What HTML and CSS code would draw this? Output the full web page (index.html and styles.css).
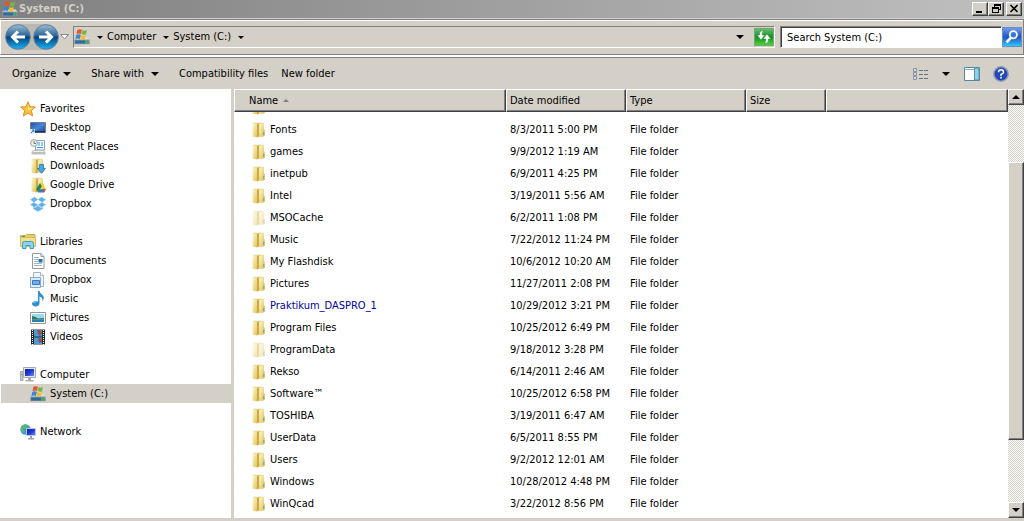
FILE: index.html
```html
<!DOCTYPE html>
<html lang="en">
<head>
<meta charset="utf-8">
<title>System (C:)</title>
<link rel="stylesheet" href="styles.css">
</head>
<body>
<svg class="defs" aria-hidden="true">
  <defs>
    <linearGradient id="gold" x1="0" x2="0" y1="0" y2="1"><stop offset="0" stop-color="#f3e399"/><stop offset="1" stop-color="#e0c055"/></linearGradient>
    <linearGradient id="page" x1="0" x2="1" y1="0" y2="1"><stop offset="0" stop-color="#fffbd4"/><stop offset="1" stop-color="#e2c256"/></linearGradient>
    <linearGradient id="ball" x1="0" x2="0" y1="0" y2="1"><stop offset="0" stop-color="#9fbdd4"/><stop offset=".45" stop-color="#2a6599"/><stop offset=".5" stop-color="#06407c"/><stop offset="1" stop-color="#19b4f4"/></linearGradient>
    <linearGradient id="screen" x1="0" x2="1" y1="0" y2="1"><stop offset="0" stop-color="#0a1cae"/><stop offset=".5" stop-color="#2038d8"/><stop offset="1" stop-color="#6d8cf4"/></linearGradient>
    <linearGradient id="desk" x1="0" x2="1" y1="0" y2="1"><stop offset="0" stop-color="#1d4fa8"/><stop offset=".5" stop-color="#4a86d8"/><stop offset="1" stop-color="#173f90"/></linearGradient>
  </defs>
  <symbol id="folder" viewBox="0 0 16 16">
    <path d="M2 1h11v13.500H2z" fill="url(#gold)"/>
    <path d="M2.500.7H12v1H2.500z" fill="#e8d78f"/>
    <path d="M1.500 1.200 6 1.800v13.700L1.500 14.300z" fill="url(#page)"/>
    <path d="M6 2 8.300 1.200v13L6 15.600z" fill="#ccaa48"/>
    <path d="M8.300 2.200 12.500 1.200v13L8.300 14.600z" fill="url(#page)"/>
    <path d="M12.500 7.500h1.200v6.500h-1.200z" fill="#d9bd62"/>
    <path d="M12.300 10h1v3h-1z" fill="#5fa58c"/>
  </symbol>
  <symbol id="drive" viewBox="0 0 16 16">
    <path d="M2 8.500h11.500l2.200 2.500H.3z" fill="#dde1e3"/>
    <path d="M.3 10.500h15.400v4.700H.3z" fill="#8395a0"/>
    <path d="M1.200 11.500h10v3h-10z" fill="#2f6c9c"/>
    <path d="M12.300 11.500h2v3h-2z" fill="#28b34c"/>
    <path d="M3.400.8Q5.600-.5 7.900.8L7 4.900Q5 3.900 2.500 5z" fill="#e5572b"/>
    <path d="M8.600 1.100Q10.600 2.300 13 1.100L12 5.400Q10 6.200 7.700 5z" fill="#72b743"/>
    <path d="M2.300 5.900Q4.500 4.700 6.800 5.900L5.900 10Q4 8.900 1.300 10z" fill="#3b86cf"/>
    <path d="M7.500 6.100Q9.500 7.200 11.800 6.300L10.900 10.500Q8.800 11.200 6.600 10z" fill="#f4bd2b"/>
  </symbol>
  <symbol id="star" viewBox="0 0 16 16">
    <path d="M8 .8 10 5.700l5.300.3-4 3.600 1.400 5.400L8 12l-4.700 3 1.400-5.400-4-3.600 5.300-.3z" fill="#fdc33c" stroke="#e18b20"/>
    <path d="M8 3 9 7l4 .3L8 9z" fill="#fff0a0"/>
  </symbol>
  <symbol id="desktop" viewBox="0 0 16 16">
    <path d="M.5 2.500h15v10H.5z" fill="url(#desk)" stroke="#777d86"/>
    <path d="M1 11h14v1.500H1z" fill="#1c3158"/>
    <path d="M0 9h5v5H0z" fill="#d9edf9"/><path d="M1 13 4 10M2 10h2v2" stroke="#2775bb" fill="none"/>
  </symbol>
  <symbol id="recent" viewBox="0 0 16 16">
    <path d="M5.500 1.500h9V11h-9z" fill="#eff8ff" stroke="#8da7bb"/>
    <path d="M8 4h2m1 0h2M8 6h2m1 0h2M7 8.500h6" stroke="#4a97d0"/>
    <path d="M3 11h11l1.500 2v2.500H1.500V13z" fill="#bcc0c3"/><path d="M3 12.500h11" stroke="#eee"/>
    <circle cx="4" cy="4" r="3.400" fill="#eef1f2" stroke="#9b9fa2"/><path d="M4 2v2.500h2" stroke="#555" fill="none" stroke-width=".8"/>
  </symbol>
  <symbol id="downloads" viewBox="0 0 16 16">
    <use href="#folder"/><path d="M9.500 6.500h4v4h2L11.500 15.300 7.500 10.500h2z" fill="#41a8e4" stroke="#2276b2" stroke-width=".8"/>
  </symbol>
  <symbol id="gdrive" viewBox="0 0 16 16">
    <use href="#folder"/><path d="m10 6 2.500 0 3.300 6h-3.600z" fill="#fbcf27"/><path d="m10 6 1.800 3.200-3.600 6.300L6.200 12z" fill="#168a50"/><path d="M9.800 12.300h6l-1.800 3.200H8z" fill="#3974ce"/><path d="m12.500 12 3.300.3-1.800 3.200z" fill="#da4d30"/>
  </symbol>
  <symbol id="dropbox" viewBox="0 0 16 16">
    <path d="M4.500 1 8 3.500 4 6.300 .3 3.700zM11.500 1 15.700 3.700 12 6.300 8 3.500zM4 6.300 8 9 4.500 11.300 .3 8.700zM12 6.300l3.700 2.400-4.200 2.600L8 9zM3.200 11l1.500 1L8 9.700l3.300 2.300 1.500-1v1.700L8 15.500l-4.800-2.800z" fill="#62afe6" stroke="#9dd0f2" stroke-width=".5"/>
  </symbol>
  <symbol id="libraries" viewBox="0 0 16 16">
    <path d="M.5 1.500h5l1-1h8.500v3H.5z" fill="#e1ca70" stroke="#c7af51"/><path d="M.5 3.500h15v9H.5z" fill="#f4df8c" stroke="#d9bd5b"/><path d="M2 2.500h3" stroke="#4ca66d"/>
    <path d="M2.500 14.500v-5q0-2 2-2h7q2 0 2 2v5h-3.500v-3H6v3z" fill="#8bd3ef" stroke="#3c9cc8"/>
  </symbol>
  <symbol id="document" viewBox="0 0 16 16">
    <path d="M2.500.5h8.500l3 3v12H2.500z" fill="#fff" stroke="#8e9ba5"/><path d="M11 .5v3h3" fill="#dfe6eb" stroke="#8e9ba5"/><path d="M4 4.500h5M4 6.500h4M4 8.500h4M4 10.500h8M4 12.500h8" stroke="#9db8d0"/><path d="M8.500 6h4v3.500h-4z" fill="#2d6f9d"/>
  </symbol>
  <symbol id="generic" viewBox="0 0 16 16">
    <path d="M3.500.5h7l3 3v11h-10z" fill="#eef5fc" stroke="#a2b4c6"/><path d="M10.500.5v3h3" fill="#fff" stroke="#a2b4c6"/><path d="M.5 5.500h10v10H.5z" fill="#dcecfb" stroke="#88a8c9"/><path d="M2.500 8.500h7v4h-7z" fill="#70adef" stroke="#347bc9"/>
  </symbol>
  <symbol id="music" viewBox="0 0 16 16">
    <path d="M8 0h1.500q.5 2.500 3 4 2.500 2.500 0 6.500.5-4-3-5v7q-.5 3-4 3-3.500-.5-3.500-3 .5-2.500 3.500-2.500 1.500 0 2.500.6z" fill="#2e91d3"/><path d="M3.500 12q.5-1.500 2.500-1.200" stroke="#a8dafa" fill="none"/>
  </symbol>
  <symbol id="picture" viewBox="0 0 16 16">
    <path d="M.5 2.500h15v11H.5z" fill="#fff" stroke="#8f989e"/><path d="M2 4h12v8H2z" fill="#9bd8f4"/><path d="M2 6q4 .5 6 2.500l6-.5v1.500H2z" fill="#2e7951"/><path d="M2 9.500h12V12H2z" fill="#2c80a7"/>
  </symbol>
  <symbol id="video" viewBox="0 0 16 16">
    <path d="M1 .5h14v15H1z" fill="#25282b"/><path d="M4 1h8v6.500H4zM4 8.500h8V15H4z" fill="#4b9bd8"/><path d="M7 1h3l2 3-2 3-2-2zM8 9l4 1v3l-3 1z" fill="#9b4e3e"/><path d="M2.500 1v15M13.500 1v15" stroke="#fff" stroke-dasharray="1 1"/>
  </symbol>
  <symbol id="computer" viewBox="0 0 16 16">
    <path d="M.5 4.500h2.500v9H.5z" fill="#c7cacc" stroke="#8a8f91" stroke-width=".7"/><path d="M1 7.500h1.500" stroke="#3abc4c"/><path d="M3.500.5h12v10h-12z" fill="#e5e7e9" stroke="#a5abb0"/><path d="M5 2h9v7H5z" fill="url(#screen)"/><path d="M8 11h3v2h2.500v1.500h-8V13H8z" fill="#a7acb1"/>
  </symbol>
  <symbol id="network" viewBox="0 0 16 16">
    <circle cx="5.500" cy="5.500" r="5.200" fill="#3e9bd6"/><path d="M2 2q3-3 5-1L6 4 3 5l1 3-2 1Q0 5 2 2zM7 4l3-1v3H7z" fill="#56bc62"/><path d="M6.500 4.500h9v7h-9z" fill="url(#screen)" stroke="#c2c8d2"/><path d="M10 12h2v2h2v1.500H8V14h2z" fill="#9ca3ad"/>
  </symbol>
  <symbol id="down" viewBox="0 0 8 4"><path d="M0 0h8L4 4z"/></symbol>
</svg>

<div class="window">
  <header class="titlebar">
    <svg class="icon"><use href="#drive"/></svg>
    <h1>System (C:)</h1>
    <div class="captions">
      <button class="cap" aria-label="Minimize"><svg viewBox="0 0 12 10"><path d="M2 7h6v2H2z"/></svg></button>
      <button class="cap" aria-label="Restore"><svg viewBox="0 0 12 10"><path d="M4 0h7v6H9V5h1V2H5v1H4zM2 3h7v6H2zm1 2v3h5V5z" fill-rule="evenodd"/></svg></button>
      <button class="cap close" aria-label="Close"><svg viewBox="0 0 12 10"><path d="m2.500 1 7 7m0-7-7 7" stroke="#000" stroke-width="1.600"/></svg></button>
    </div>
  </header>

  <nav class="navbar" aria-label="Address">
    <div class="travel">
      <button aria-label="Back"><svg viewBox="0 0 26 26"><circle cx="13" cy="13" r="12.300" fill="url(#ball)" stroke="#5e7f9c"/><path d="M20 13H8m5-5.500L7.500 13l5.500 5.500" fill="none" stroke="#fff" stroke-width="3"/></svg></button>
      <button aria-label="Forward"><svg viewBox="0 0 26 26"><circle cx="13" cy="13" r="12.300" fill="url(#ball)" stroke="#5e7f9c"/><path d="M6 13h12m-5-5.500 5.500 5.500-5.500 5.500" fill="none" stroke="#fff" stroke-width="3"/></svg></button>
    </div>
    <button class="history" aria-label="Recent pages"><svg viewBox="0 0 9 6"><path d="M.5.5h8l-4 4.500z" fill="#fff" stroke="#8a8a8a"/></svg></button>
    <div class="address">
      <svg class="icon"><use href="#drive"/></svg>
      <button class="arrow" aria-label="Root"><svg><use href="#down"/></svg></button>
      <a href="#computer">Computer</a>
      <button class="arrow" aria-label="Computer locations"><svg><use href="#down"/></svg></button>
      <a href="#system">System (C:)</a>
      <button class="arrow" aria-label="System locations"><svg><use href="#down"/></svg></button>
      <button class="arrow last" aria-label="Previous locations"><svg><use href="#down"/></svg></button>
      <button class="refresh" aria-label="Refresh"><svg viewBox="0 0 18 16"><path d="M8 1.500Q4.500 1.500 4.500 5v1H2l4 5 4-5H7.200V4.500Q7.200 3.500 8 3.500zM10 14.500q3.500 0 3.500-3.500v-1H16l-4-5-4 5h2.800v1.500q0 1-.8 1z" fill="#fff" stroke="#16802a" stroke-width=".5"/></svg></button>
    </div>
    <input class="search" type="text" aria-label="Search" value="Search System (C:)">
    <button class="go" aria-label="Go"><svg viewBox="0 0 20 20"><circle cx="11.500" cy="7.500" r="4" fill="#3a78dc" stroke="#fff" stroke-width="2"/><path d="m8.500 11-4.500 5" stroke="#fff" stroke-width="3"/></svg></button>
  </nav>

  <div class="toolbar">
    <button class="menu">Organize <svg class="big"><use href="#down"/></svg></button>
    <button class="menu">Share with <svg class="big"><use href="#down"/></svg></button>
    <button>Compatibility files</button>
    <button>New folder</button>
    <div class="views">
      <button aria-label="View"><svg class="icon" viewBox="0 0 16 16"><path d="M.5 2.500h3v3h-3zm0 4h3v3h-3zm0 4h3v3h-3z" fill="#fff" stroke="#8993a3"/><path d="M1.500 4h1M1.500 12h1" stroke="#3670c0"/><path d="M1.500 8h1" stroke="#c22"/><path d="M6 4.500h4m1 0h4M6 8.500h4m1 0h4M6 12.500h4m1 0h4" stroke="#667482"/></svg></button>
      <button aria-label="View options"><svg class="big"><use href="#down"/></svg></button>
      <button class="pane" aria-label="Preview pane"><svg class="icon" viewBox="0 0 16 16"><path d="M.5 1.500h15v13H.5z" fill="#fff" stroke="#5486a5"/><path d="M1 3.500h9" stroke="#91afc4"/><path d="M10.500 2h4.500v12h-4.500z" fill="#8fd0e6" stroke="#538fae"/></svg></button>
      <button aria-label="Help"><svg class="icon" viewBox="0 0 16 16"><circle cx="8" cy="8" r="7.200" fill="#2449b4" stroke="#8c9bbd" stroke-width="1.500"/><path d="M5.500 6.200q0-2.500 2.500-2.500t2.500 2.500Q10.500 7.400 8 8.400v1.300M8 10.800v1.700" fill="none" stroke="#fff" stroke-width="1.600"/></svg></button>
    </div>
  </div>

  <div class="main">
    <aside class="tree">
      <ul>
        <li><a href="#f"><svg class="icon"><use href="#star"/></svg>Favorites</a>
          <ul>
            <li><a href="#f1"><svg class="icon"><use href="#desktop"/></svg>Desktop</a></li>
            <li><a href="#f2"><svg class="icon"><use href="#recent"/></svg>Recent Places</a></li>
            <li><a href="#f3"><svg class="icon"><use href="#downloads"/></svg>Downloads</a></li>
            <li><a href="#f4"><svg class="icon"><use href="#gdrive"/></svg>Google Drive</a></li>
            <li><a href="#f5"><svg class="icon"><use href="#dropbox"/></svg>Dropbox</a></li>
          </ul></li>
        <li><a href="#l"><svg class="icon"><use href="#libraries"/></svg>Libraries</a>
          <ul>
            <li><a href="#l1"><svg class="icon"><use href="#document"/></svg>Documents</a></li>
            <li><a href="#l2"><svg class="icon"><use href="#generic"/></svg>Dropbox</a></li>
            <li><a href="#l3"><svg class="icon"><use href="#music"/></svg>Music</a></li>
            <li><a href="#l4"><svg class="icon"><use href="#picture"/></svg>Pictures</a></li>
            <li><a href="#l5"><svg class="icon"><use href="#video"/></svg>Videos</a></li>
          </ul></li>
        <li><a href="#c"><svg class="icon"><use href="#computer"/></svg>Computer</a>
          <ul><li><a class="selected" href="#c1"><svg class="icon"><use href="#drive"/></svg>System (C:)</a></li></ul></li>
        <li><a href="#n"><svg class="icon"><use href="#network"/></svg>Network</a></li>
      </ul>
    </aside>

    <main class="files">
      <table>
        <colgroup><col class="c-name"><col class="c-date"><col class="c-type"><col class="c-size"><col></colgroup>
        <thead><tr><th>Name <svg class="sort" viewBox="0 0 6 3"><path d="M0 3h6L3 0z"/></svg></th><th>Date modified</th><th>Type</th><th>Size</th><th></th></tr></thead>
        <tbody>
          <tr class="cut"><td><div><svg class="icon"><use href="#folder"/></svg></div></td><td></td><td></td><td></td><td></td></tr>
          <tr><td><svg class="icon"><use href="#folder"/></svg>Fonts</td><td>8/3/2011 5:00 PM</td><td>File folder</td><td></td><td></td></tr>
          <tr><td><svg class="icon"><use href="#folder"/></svg>games</td><td>9/9/2012 1:19 AM</td><td>File folder</td><td></td><td></td></tr>
          <tr><td><svg class="icon"><use href="#folder"/></svg>inetpub</td><td>6/9/2011 4:25 PM</td><td>File folder</td><td></td><td></td></tr>
          <tr><td><svg class="icon"><use href="#folder"/></svg>Intel</td><td>3/19/2011 5:56 AM</td><td>File folder</td><td></td><td></td></tr>
          <tr class="hidden-item"><td><svg class="icon"><use href="#folder"/></svg>MSOCache</td><td>6/2/2011 1:08 PM</td><td>File folder</td><td></td><td></td></tr>
          <tr><td><svg class="icon"><use href="#folder"/></svg>Music</td><td>7/22/2012 11:24 PM</td><td>File folder</td><td></td><td></td></tr>
          <tr><td><svg class="icon"><use href="#folder"/></svg>My Flashdisk</td><td>10/6/2012 10:20 AM</td><td>File folder</td><td></td><td></td></tr>
          <tr><td><svg class="icon"><use href="#folder"/></svg>Pictures</td><td>11/27/2011 2:08 PM</td><td>File folder</td><td></td><td></td></tr>
          <tr class="compressed"><td><svg class="icon"><use href="#folder"/></svg>Praktikum_DASPRO_1</td><td>10/29/2012 3:21 PM</td><td>File folder</td><td></td><td></td></tr>
          <tr><td><svg class="icon"><use href="#folder"/></svg>Program Files</td><td>10/25/2012 6:49 PM</td><td>File folder</td><td></td><td></td></tr>
          <tr class="hidden-item"><td><svg class="icon"><use href="#folder"/></svg>ProgramData</td><td>9/18/2012 3:28 PM</td><td>File folder</td><td></td><td></td></tr>
          <tr><td><svg class="icon"><use href="#folder"/></svg>Rekso</td><td>6/14/2011 2:46 AM</td><td>File folder</td><td></td><td></td></tr>
          <tr><td><svg class="icon"><use href="#folder"/></svg>Software™</td><td>10/25/2012 6:58 PM</td><td>File folder</td><td></td><td></td></tr>
          <tr><td><svg class="icon"><use href="#folder"/></svg>TOSHIBA</td><td>3/19/2011 6:47 AM</td><td>File folder</td><td></td><td></td></tr>
          <tr><td><svg class="icon"><use href="#folder"/></svg>UserData</td><td>6/5/2011 8:55 PM</td><td>File folder</td><td></td><td></td></tr>
          <tr><td><svg class="icon"><use href="#folder"/></svg>Users</td><td>9/2/2012 12:01 AM</td><td>File folder</td><td></td><td></td></tr>
          <tr><td><svg class="icon"><use href="#folder"/></svg>Windows</td><td>10/28/2012 4:48 PM</td><td>File folder</td><td></td><td></td></tr>
          <tr><td><svg class="icon"><use href="#folder"/></svg>WinQcad</td><td>3/22/2012 8:56 PM</td><td>File folder</td><td></td><td></td></tr>
        </tbody>
      </table>
    </main>

    <div class="scroll">
      <button class="cap" aria-label="Scroll up"><svg class="big up"><use href="#down"/></svg></button>
      <div class="track"><div class="thumb"></div></div>
      <button class="cap" aria-label="Scroll down"><svg class="big"><use href="#down"/></svg></button>
    </div>
  </div>
</div>
</body>
</html>
```
FILE: styles.css
```css
* { box-sizing: border-box; }
body {
  margin: 0;
  background: #d4d0c8;
  color: #000;
  font: 11px/14px "DejaVu Sans Condensed", Tahoma, sans-serif;
}
button, input { font: inherit; color: inherit; }
button { padding: 0; border: 0; background: none; display: flex; align-items: center; }
a { color: inherit; text-decoration: none; }
svg { display: block; flex: none; }
.defs { position: absolute; width: 0; height: 0; }
.icon { width: 16px; height: 16px; }
.big { width: 8px; height: 4px; }

.window { display: flex; flex-direction: column; height: 100vh; padding-bottom: 3px; }

.titlebar {
  display: flex; align-items: center; height: 18px; padding: 0 2px;
  background: linear-gradient(90deg, #808080, #c0c0c0);
}
h1 { flex: 1; margin: 0 0 0 1px; color: #d4d0c8; font-size: 11px; line-height: 16px; font-weight: bold; }
.captions { display: flex; }
.cap {
  width: 16px; height: 14px; justify-content: center; background: #d4d0c8;
  border: 1px solid; border-color: #fff #404040 #404040 #fff;
  box-shadow: inset -1px -1px #808080;
}
.cap svg:not(.big) { width: 12px; height: 10px; }
.close { margin-left: 2px; }

.navbar {
  display: flex; align-items: center; height: 36px; margin-top: 1px; padding: 0 1px 0 4px;
  border: 1px solid; border-color: #808080 #808080 #808080 #fff;
  box-shadow: inset 0 1px #fff, 0 2px #fff;
}
.travel { display: flex; gap: 2px; border-radius: 13px; background: #b9b9b6; }
.travel svg { width: 26px; height: 26px; }
.history { margin: 0 4px 0 1px; }
.history svg { width: 9px; height: 6px; }
.address {
  flex: 1; display: flex; align-items: center; height: 22px;
  border: 1px solid; border-color: #808080 #fff #fff #808080;
}
.arrow { padding: 0 4px; margin-left: 3px; }
.arrow svg { width: 6px; height: 3px; }
.arrow.last { margin-left: auto; padding: 0 10px; }
.arrow.last svg { width: 8px; height: 4px; }
.refresh { width: 20px; height: 18px; border: 1px solid #72a878; background: linear-gradient(#66bd68, #149126 50%, #4bd334); }
.refresh svg { width: 18px; height: 16px; }
.search {
  width: 222px; height: 22px; margin-left: 5px; padding: 0 6px; background: #fff;
  border: 1px solid; border-color: #808080 #fff #fff #808080; box-shadow: inset 1px 1px #404040;
}
.go { width: 20px; height: 20px; border: 1px solid #6a8fc8; background: linear-gradient(#6f9cec, #2352c8 50%, #34c6f4); }
.go svg { width: 18px; height: 18px; }

.toolbar {
  display: flex; align-items: center; gap: 13px; height: 32px; margin-top: 2px; padding: 0 15px 0 12px;
  border-top: 1px solid #808080;
}
.toolbar button { gap: 7px; }
.toolbar .menu { padding-right: 7px; }
.views { display: flex; align-items: center; margin-left: auto; gap: 13px; }
.views .pane { padding-left: 1px; }

.main { flex: 1; display: flex; min-height: 0; }
.tree { width: 234px; padding: 10px 0 0 1px; background: #fff; border-right: 3px solid #d4d0c8; }
ul { list-style: none; margin: 0; padding: 0; }
.tree > ul > li { margin-bottom: 19px; }
.tree a { display: flex; align-items: center; gap: 4px; height: 19px; padding-left: 19px; }
.tree li li a { padding-left: 29px; }
.tree .selected { background: #d4d0c8; }

.files { flex: 1; min-width: 0; overflow: hidden; background: #fff; }
table { width: 100%; table-layout: fixed; border-collapse: separate; border-spacing: 0; }
.c-name { width: 272px; }
.c-date, .c-type { width: 120px; }
.c-size { width: 80px; }
th {
  height: 23px; padding: 0 3px; text-align: left; font-weight: normal; background: #d4d0c8;
  border: 1px solid; border-color: #fff #404040 #404040 #fff;
  box-shadow: inset -1px -1px #808080;
}
th:first-child { padding-left: 14px; }
.sort { display: inline-block; width: 6px; height: 3px; margin-left: 2px; vertical-align: middle; fill: #808080; }
td { height: 22px; padding: 0 4px; white-space: nowrap; }
td:first-child { padding-left: 17px; }
td .icon { display: inline-block; margin-right: 3px; vertical-align: middle; }
.cut td { height: 7px; }
.cut div { display: flex; flex-direction: column; justify-content: flex-end; height: 7px; padding-bottom: 4px; overflow: hidden; }
.hidden-item .icon { opacity: .45; }
.compressed td:first-child { color: #0000a0; }

.scroll { width: 16px; display: flex; flex-direction: column; }
.scroll .cap { height: 16px; }
.up { transform: rotate(180deg); }
.track { flex: 1; display: flex; flex-direction: column; background: repeating-conic-gradient(#d4d0c8 0 25%, #fff 0 50%) 0 0 / 2px 2px; }
.thumb {
  height: 70%; margin-top: 57px; background: #d4d0c8;
  border: 1px solid; border-color: #fff #404040 #404040 #fff; box-shadow: inset -1px -1px #808080;
}
```
